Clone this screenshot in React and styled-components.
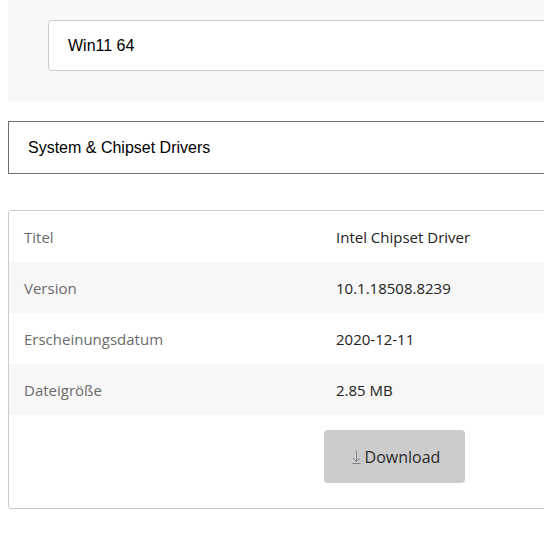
import React from "react";
import styled, { createGlobalStyle } from "styled-components";

const GlobalStyle = createGlobalStyle`
  body {
    margin: 0 0 0 8px;
    overflow: hidden;
    background: #fff;
    font-family: "Liberation Sans", Arial, sans-serif;
  }
`;

const driver = [
  { label: "Titel", value: "Intel Chipset Driver" },
  { label: "Version", value: "10.1.18508.8239" },
  { label: "Erscheinungsdatum", value: "2020-12-11" },
  { label: "Dateigröße", value: "2.85 MB" },
];

const Page = styled.div`
  width: 680px;
`;

const FilterPanel = styled.div`
  background: #f8f8f8;
  padding: 20px 40px 30px;
`;

const SearchInput = styled.input`
  display: block;
  box-sizing: border-box;
  width: 100%;
  height: 51px;
  padding: 0 19px;
  border: 1px solid #cccccc;
  border-radius: 4px;
  background: #fff;
  font-family: "Liberation Sans", Arial, sans-serif;
  font-size: 16px;
  color: #000;
  outline: none;
`;

const CategorySelect = styled.div`
  box-sizing: border-box;
  height: 53px;
  margin-top: 20px;
  padding: 0 19px;
  display: flex;
  align-items: center;
  border: 1px solid #707070;
  font-size: 16px;
  color: #000;
`;

const Card = styled.div`
  margin-top: 36px;
  border: 1px solid #cccccc;
  border-radius: 3px;
  font-family: "Open Sans", "Segoe UI", sans-serif;
  font-size: 15px;
`;

const Row = styled.div`
  display: grid;
  grid-template-columns: 312px 1fr;
  height: 51px;
  align-items: center;
  background: ${(p) => (p.$striped ? "#f7f7f7" : "#fff")};
`;

const Label = styled.span`
  padding-left: 15px;
  color: #6b6b6b;
`;

const Value = styled.span`
  padding-left: 15px;
  color: #222;
`;

const ActionRow = styled.div`
  display: grid;
  grid-template-columns: 315px 1fr;
  padding: 15px 0 25px;
`;

const DownloadButton = styled.button`
  grid-column: 2;
  justify-self: start;
  width: 141px;
  height: 53px;
  padding: 0 0 0 3px;
  border: none;
  border-radius: 4px;
  background: #cccccc;
  font-family: "Open Sans", "Segoe UI", sans-serif;
  font-size: 16px;
  color: #2a2a2a;
  display: flex;
  align-items: center;
  justify-content: center;
  gap: 4px;
`;

const ArrowIcon = () => (
  <svg width="9" height="14" viewBox="0 0 9 14" fill="none" stroke="#8a8094" strokeWidth="1">
    <path d="M4.5 0.5v11M1 8l3.5 3.5L8 8M0.5 13.5h8" />
  </svg>
);

export default function App() {
  return (
    <Page>
      <GlobalStyle />
      <FilterPanel>
        <SearchInput defaultValue="Win11 64" />
      </FilterPanel>
      <CategorySelect>System &amp; Chipset Drivers</CategorySelect>
      <Card>
        {driver.map((item, i) => (
          <Row key={item.label} $striped={i % 2 === 1}>
            <Label>{item.label}</Label>
            <Value>{item.value}</Value>
          </Row>
        ))}
        <ActionRow>
          <DownloadButton>
            <ArrowIcon />
            Download
          </DownloadButton>
        </ActionRow>
      </Card>
    </Page>
  );
}
